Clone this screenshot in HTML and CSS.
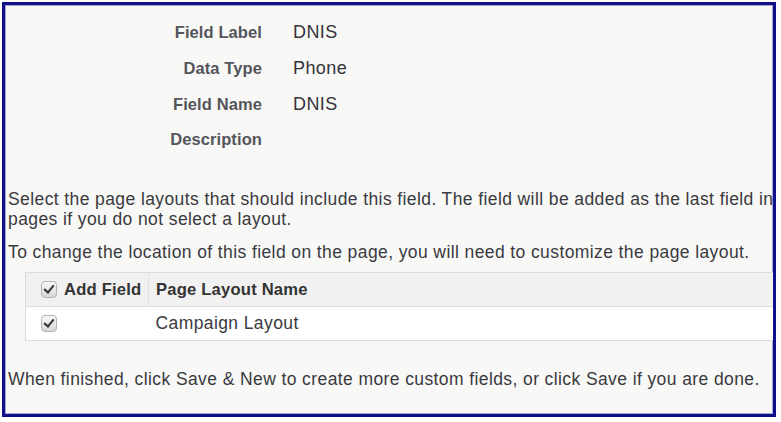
FILE: index.html
```html
<!DOCTYPE html>
<html lang="en">
<head>
<meta charset="UTF-8">
<meta name="viewport" content="width=device-width, initial-scale=1.0">
<link rel="stylesheet" href="styles.css">
</head>
<body>

<div class="frame">
    <dl class="field-info">
        <div class="info-row"><dt>Field Label</dt><dd>DNIS</dd></div>
        <div class="info-row"><dt>Data Type</dt><dd>Phone</dd></div>
        <div class="info-row"><dt>Field Name</dt><dd>DNIS</dd></div>
        <div class="info-row"><dt>Description</dt><dd></dd></div>
    </dl>

    <p class="note note-select">Select the page layouts that should include this field. The field will be added as the last field in the first 2-column section of these page layouts. The field will not appear on any<br>pages if you do not select a layout.</p>
    <p class="note note-move">To change the location of this field on the page, you will need to customize the page layout.</p>

    <table class="layout-table">
        <thead>
            <tr>
                <th class="col-add"><span class="check"></span>Add Field</th>
                <th class="col-name">Page Layout Name</th>
            </tr>
        </thead>
        <tbody>
            <tr>
                <td class="col-add"><span class="check"></span></td>
                <td class="col-name">Campaign Layout</td>
            </tr>
        </tbody>
    </table>

    <p class="note note-done">When finished, click Save &amp; New to create more custom fields, or click Save if you are done.</p>
</div>

</body>
</html>
```

FILE: styles.css
```css
body {
    margin: 0;
    background: #fff;
    font-family: "Liberation Sans", Arial, sans-serif;
    color: #3a3a3f;
}

.frame {
    margin: 2px 0 0 2px;
    width: 768px;
    height: 409px;
    border: 3px solid #10108a;
    box-shadow: inset 0 0 0 1px #a6a6d6;
    background: #f8f8f6;
    overflow: hidden;
}

/* field summary */
.field-info {
    margin: 17px 0 0;
    padding: 0;
}

.info-row {
    display: flex;
    align-items: baseline;
    height: 36px;
}

.info-row dt {
    width: 257px;
    text-align: right;
    font-weight: bold;
    font-size: 16.5px;
    letter-spacing: 0.1px;
    color: #55555c;
}

.info-row dd {
    margin: 0 0 0 31px;
    font-size: 18px;
    letter-spacing: 0.4px;
    color: #333338;
}

/* help text */
.note {
    margin: 0 0 0 3px;
    font-size: 17.5px;
    line-height: 20px;
    letter-spacing: 0.4px;
    white-space: nowrap;
}

.note-select {
    margin-top: 23px;
}

.note-move {
    margin-top: 13px;
}

.note-done {
    margin-top: 28px;
}

/* page layout table */
.layout-table {
    margin: 10px 0 0 20px;
    width: 800px;
    border-collapse: collapse;
    border: 1px solid #dcdcdc;
}

.layout-table th,
.layout-table td {
    box-sizing: border-box;
    padding: 0;
    height: 34px;
}

.layout-table th {
    background: #f1f1f1;
    text-align: left;
    font-weight: bold;
    font-size: 16.6px;
    letter-spacing: 0.2px;
    color: #333;
}

.layout-table td {
    background: #fff;
    font-size: 17.5px;
    letter-spacing: 0.4px;
    color: #3a3a40;
    border-top: 1px solid #dcdcdc;
}

.col-add {
    width: 123px;
    padding-left: 15px !important;
}

th.col-add {
    border-right: 1px solid #e2e2e2;
}

.col-name {
    padding-left: 7px !important;
}

.check {
    display: inline-block;
    vertical-align: -3px;
    width: 14px;
    height: 15px;
    margin-right: 7px;
    border: 1px solid #b4b4b4;
    border-radius: 4px;
    background: linear-gradient(#f8f8f8, #d8d8d8);
    position: relative;
}

.check::after {
    content: "";
    position: absolute;
    left: 4px;
    top: 1px;
    width: 4px;
    height: 8px;
    border: solid #333;
    border-width: 0 2px 2px 0;
    transform: rotate(40deg);
}
```
